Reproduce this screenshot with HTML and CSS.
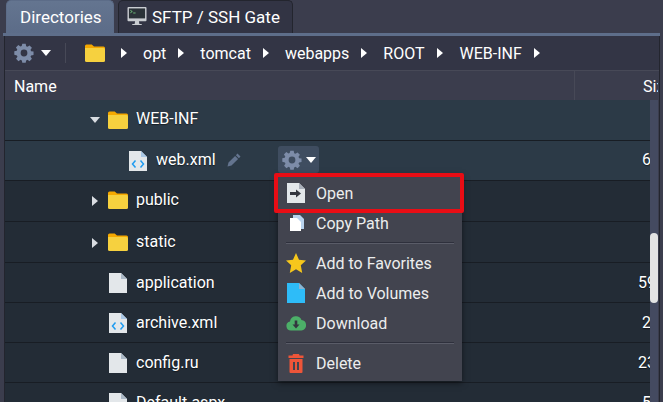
FILE: index.html
```html
<!DOCTYPE html>
<html lang="en">
<head>
<meta charset="utf-8">
<title>File manager</title>
<link rel="stylesheet" href="styles.css">
</head>
<body>
<svg class="defs" width="0" height="0" aria-hidden="true">
  <defs>
    <symbol id="gear" viewBox="-1 0 26 24"><path fill-rule="evenodd" d="M9.800 0h4.400l.6 3.200 1.700.7 2.700-1.800 3.100 3.100-1.800 2.700.7 1.700 3.200.6v4.400l-3.200.6-.7 1.700 1.800 2.700-3.100 3.100-2.700-1.800-1.700.7-.6 3.200H9.800l-.6-3.200-1.700-.7-2.700 1.800-3.100-3.100 1.800-2.700-.7-1.700L-.6 14.200V9.800L2.600 9.200l.7-1.700L1.500 4.800 4.600 1.700l2.700 1.800 1.700-.7zM12 7.600a4.400 4.400 0 1 0 0 8.800 4.400 4.400 0 0 0 0-8.800z"/></symbol>
    <symbol id="folder" viewBox="0 0 20 20"><path fill="#f5a800" d="M0 3a1.500 1.500 0 0 1 1.500-1.500h5.200L9 3.500h9.500A1.500 1.500 0 0 1 20 5v3H0z"/><path fill="#f6d13f" d="M0 5h18.500A1.500 1.500 0 0 1 20 6.500v11a1.500 1.500 0 0 1-1.500 1.500h-17A1.500 1.500 0 0 1 0 17.500z"/></symbol>
    <symbol id="file" viewBox="0 0 18 20"><path fill="#e3e7ea" d="M0 0h12l6 6v14H0z"/><path fill="#aab8c6" d="M12 0l6 6h-6z"/></symbol>
    <symbol id="xml" viewBox="0 0 18 20"><path fill="#e3e7ea" d="M0 0h12l6 6v14H0z"/><path fill="#aac8e6" d="M12 0l6 6h-6z"/><path fill="none" stroke="#1e9bf0" stroke-width="1.500" d="M6.500 9.500L3.500 13l3 3.500M11.500 9.500l3 3.500-3 3.500"/></symbol>
  </defs>
</svg>
<main class="app">
  <nav class="tabs">
    <div class="tab tab-active">Directories</div>
    <div class="tab">
      <svg class="monitor" viewBox="0 0 20 20" width="20" height="19"><path fill="#c9ccd1" d="M1 0h18a1 1 0 0 1 1 1v13a1 1 0 0 1-1 1H12l.5 3H15v1H5v-1h2.500l.5-3H1a1 1 0 0 1-1-1V1a1 1 0 0 1 1-1z"/><path fill="#2b3238" d="M1.500 1.500h17V12h-17z"/><path fill="none" stroke="#7fe08a" stroke-width=".8" d="M3 3.500l2 1.300-2 1.300M6 6.300h2.500"/></svg>
      <span>SFTP / SSH Gate</span>
    </div>
  </nav>
  <div class="tab-rule"></div>
  <section class="panel">
    <div class="toolbar">
      <div class="gear-btn">
        <svg class="gear"><use href="#gear"/></svg><span class="caret-down"></span>
      </div>
      <span class="tool-sep"></span>
      <svg class="crumb-folder"><use href="#folder"/></svg>
      <span class="arrow crumb-first"></span>
      <span class="crumb">opt</span><span class="arrow"></span>
      <span class="crumb">tomcat</span><span class="arrow"></span>
      <span class="crumb">webapps</span><span class="arrow"></span>
      <span class="crumb">ROOT</span><span class="arrow arrow-wide"></span>
      <span class="crumb">WEB-INF</span><span class="arrow"></span>
    </div>
    <div class="head">
      <div class="head-name">Name</div>
      <div class="head-size">Size</div>
    </div>
    <div class="body">
      <div class="rows">
        <div class="row row-hl row-h40 row-open">
          <span class="cell-name indent-1"><span class="caret-down small"></span><svg class="folder"><use href="#folder"/></svg><span>WEB-INF</span></span>
        </div>
        <div class="row row-hl row-h40 row-active">
          <span class="cell-name indent-2">
            <svg class="file file-low"><use href="#xml"/></svg><span>web.xml</span>
            <svg class="pencil" viewBox="0 0 14 14" width="14" height="14"><path fill="#64748f" d="M10.500.6l3 3-1.600 1.600-3-3zM8.100 3l3 3-6.600 6.600-4 1 1-4z"/></svg>
            <span class="row-gear"><svg class="gear"><use href="#gear"/></svg><span class="caret-down"></span></span>
          </span>
          <span class="cell-size">6</span>
        </div>
        <div class="row row-h41 row-public">
          <span class="cell-name indent-1"><span class="arrow folder-arrow"></span><svg class="folder"><use href="#folder"/></svg><span>public</span></span>
        </div>
        <div class="row row-h41 row-static">
          <span class="cell-name indent-1"><span class="arrow folder-arrow"></span><svg class="folder"><use href="#folder"/></svg><span>static</span></span>
        </div>
        <div class="row row-h40 row-file">
          <span class="cell-name indent-3"><svg class="file"><use href="#file"/></svg><span>application</span></span>
          <span class="cell-size cell-size-wide">59</span>
        </div>
        <div class="row row-h40 row-file">
          <span class="cell-name indent-3"><svg class="file"><use href="#xml"/></svg><span>archive.xml</span></span>
          <span class="cell-size">2</span>
        </div>
        <div class="row row-h40 row-file">
          <span class="cell-name indent-3"><svg class="file"><use href="#file"/></svg><span>config.ru</span></span>
          <span class="cell-size cell-size-wide">23</span>
        </div>
        <div class="row row-h40 row-file">
          <span class="cell-name indent-3"><svg class="file"><use href="#file"/></svg><span>Default.aspx</span></span>
          <span class="cell-size">5</span>
        </div>
      </div>
      <div class="scroll"><div class="thumb"></div></div>
    </div>
  </section>
  <div class="menu">
    <div class="item item-marked">
      <svg class="mi" viewBox="0 0 18 20"><path fill="#e3e7ea" d="M0 0h12l6 6v14H0z"/><path fill="#aab0ba" d="M12 0l6 6h-6z"/><path fill="#33363f" d="M3 9h6V6.500l5 4-5 4V12H3z"/></svg>
      <span>Open</span>
    </div>
    <div class="item">
      <svg class="mi" viewBox="0 0 18 20"><path fill="#b9d3ee" d="M6 2h7l4 4v10H6z"/><path fill="#fff" d="M3 5h7l4 4v9H3z"/></svg>
      <span>Copy Path</span>
    </div>
    <div class="sep"></div>
    <div class="item">
      <svg class="mi mi-wide" viewBox="0 0 20 20"><path fill="#f6c71c" d="M10 0l3 6.700 7 .8-5.200 4.800L16.200 20 10 16.200 3.800 20l1.400-7.700L0 7.500l7-.8z"/></svg>
      <span>Add to Favorites</span>
    </div>
    <div class="item">
      <svg class="mi" viewBox="0 0 18 20"><path fill="#2ebcf8" d="M0 0h12l6 6v14H0z"/><path fill="#8db4d0" d="M12 0l6 6h-6z"/></svg>
      <span>Add to Volumes</span>
    </div>
    <div class="item">
      <svg class="mi mi-wide" viewBox="0 0 20 16"><path fill="#4caf68" d="M5 15.500a4.500 4.500 0 0 1-1-8.900A6 6 0 0 1 15.500 5a5.300 5.300 0 0 1 0 10.500z"/><path fill="#33363f" d="M8.700 5.500h2.600v4h2.200L10 13.500l-3.500-4h2.200z"/></svg>
      <span>Download</span>
    </div>
    <div class="sep"></div>
    <div class="item">
      <svg class="mi" viewBox="0 0 18 20"><path fill="#ee5539" d="M6 1h6l.5 1.500H16.500V5H1.500V2.500h4zM2.500 6h13v13a1 1 0 0 1-1 1H3.500a1 1 0 0 1-1-1z"/><path fill="#42444f" d="M6 9h2v8H6zM10 9h2v8h-2z"/></svg>
      <span>Delete</span>
    </div>
  </div>
</main>
</body>
</html>
```
FILE: styles.css
```css
* { box-sizing: border-box; }
html, body { margin: 0; height: 100%; overflow: hidden; }
body { background: #3b3d4d; font: 16px/20px Roboto, sans-serif; color: #fff; }
.defs { position: absolute; }
.app { position: relative; width: 663px; height: 402px; overflow: hidden; display: flex; flex-direction: column; }

.tabs { height: 33px; display: flex; gap: 4px; padding-left: 6px; flex: none; font-size: 17px; }
.tab { height: 33px; display: flex; align-items: center; gap: 5px; padding: 0 12px 0 8px; background: #323444; border: 1px solid #23252e; border-bottom: 0; border-radius: 5px 5px 0 0; }
.tab-active { width: 108px; padding: 0 0 0 13px; background: linear-gradient(#647590, #5c6c88); border-color: #5c6c88; }
.monitor { flex: none; margin-top: -2px; }
.tab-rule { height: 3px; flex: none; margin: 0 3px; background: #5e6e8a; }

.panel { flex: 1; min-height: 0; display: flex; flex-direction: column; margin: 0 3px 0 4px; border-left: 1px solid #23252e; border-right: 1px solid #23252e; }

.toolbar { height: 35px; flex: none; display: flex; align-items: center; background: #333545; border-bottom: 1px solid #474957; }
.gear-btn { display: flex; align-items: center; gap: 7px; padding-left: 9px; width: 60px; }
.gear { width: 20px; height: 20px; fill: #7d8ca8; flex: none; }
.caret-down { width: 0; height: 0; border-left: 5px solid transparent; border-right: 5px solid transparent; border-top: 6px solid #fff; flex: none; }
.caret-down.small { border-top-color: #d9dde2; margin: 2px 8px 0 0; }
.tool-sep { width: 1px; height: 20px; background: #474957; }
.crumb-folder { width: 20px; height: 20px; margin-left: 19px; }
.arrow { width: 0; height: 0; border-top: 5px solid transparent; border-bottom: 5px solid transparent; border-left: 6px solid #fff; margin: 0 16px 0 12px; flex: none; }
.crumb-first { margin-left: 16px; }
.arrow-wide { margin-right: 17px; }
.crumb { margin-top: 2px; }
.head { height: 29px; flex: none; display: flex; background: #3b3d4d; }
.head-name { width: 570px; padding: 6px 9px 0; border-right: 1px solid #474957; }
.head-size { width: 83px; padding: 6px 0 0 68px; white-space: nowrap; overflow: hidden; }

.body { flex: 1; min-height: 0; display: flex; background: #3b3d4d; }
.rows { flex: 1; min-width: 0; overflow: hidden; }
.row { display: flex; align-items: center; justify-content: space-between; background: #232c36; border-top: 1px solid #181d24; overflow: hidden; text-shadow: 0 1px 1px rgba(0,0,0,.5); }
.row-h40 { height: 40px; }
.row-h41 { height: 41px; }
.row-hl { background: #2c3a47; }
.row-open { padding-bottom: 3px; border-top-color: #2c3a47; }
.row-open .folder { margin-top: 2px; }
.row-active { padding-bottom: 2px; }
.row-public { padding-bottom: 2px; }
.row-static { padding: 1px 0; }
.row-file { padding-top: 1px; }
.cell-name { display: flex; align-items: center; }
.indent-1 { padding-left: 85px; }
.indent-2 { padding-left: 124px; }
.indent-3 { padding-left: 104px; }
.folder { width: 20px; height: 20px; margin-right: 8px; flex: none; }
.folder-arrow { margin: 1px 10px 0 2px; border-left-color: #d9dde2; }
.file { width: 18px; height: 20px; margin-right: 9px; flex: none; }
.file-low { margin-top: 2px; }
.pencil { margin: 0 0 0 11px; }
.row-gear { display: flex; align-items: center; gap: 4px; margin-left: 37px; width: 41px; height: 27px; background: #3f4d60; border-radius: 3px; padding-left: 4px; }
.cell-size { width: 8px; white-space: nowrap; }
.cell-size-wide { width: 12px; }

.scroll { width: 8px; background: #444a60; flex: none; margin-right: 1px; position: relative; }
.thumb { position: absolute; left: 0; top: 133px; width: 8px; height: 70px; background: #e3e3e3; border-radius: 4px; }

.menu { position: absolute; left: 278px; top: 174px; width: 184px; height: 207px; padding: 4px 0 3px; background: #42444f; box-shadow: 0 2px 6px rgba(0,0,0,.5); }
.item { height: 30px; display: flex; align-items: center; gap: 11px; padding-left: 9px; color: #eceded; }
.item span { margin-top: 2px; }
.item .mi { width: 18px; height: 20px; flex: none; }
.item .mi-wide { width: 20px; margin-left: -1px; margin-right: -1px; }
.item-marked { position: relative; }
.item-marked::after { content: ""; position: absolute; left: -4px; right: -2px; top: -5px; bottom: -5px; border: 4px solid #e90d15; border-radius: 2px; }
.sep { height: 2px; margin: 4px 8px; background: #2e303c; border-bottom: 1px solid #5a5c68; }
```
